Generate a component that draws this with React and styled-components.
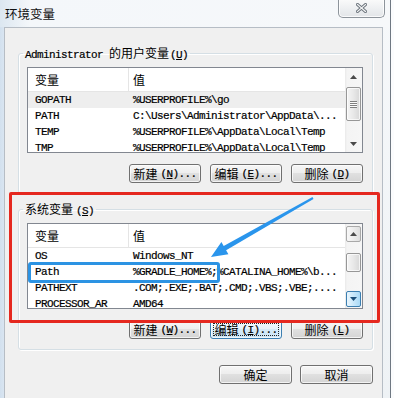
import React from "react";
import styled, { createGlobalStyle, css } from "styled-components";

const CJK = `"Noto Sans CJK SC", "Noto Sans", sans-serif`;
const MONO = `"Liberation Mono", "Noto Sans CJK SC", monospace`;

const GlobalStyle = createGlobalStyle`
  html, body { margin: 0; padding: 0; }
  body { width: 394px; height: 398px; overflow: hidden; background: #fbfcfd; font-family: ${CJK}; }
  * { box-sizing: border-box; }
`;

const Screen = styled.div`
  position: relative;
  width: 394px;
  height: 398px;
  overflow: hidden;
  display: flex;
  background: #fbfcfd;
`;

const Frame = styled.div`
  width: 391px;
  height: 100%;
  display: flex;
  flex-direction: column;
  border-right: 1px solid #6f7882;
  background: linear-gradient(180deg, #f6f8fa 0%, #eef2f5 100%);
`;

const TitleBar = styled.div`
  flex: none;
  height: 27px;
  display: flex;
  align-items: flex-start;
  background: linear-gradient(90deg, #dce7f1 0px, #f4f7fa 30px, #f6f8fa 100%);
`;

const Title = styled.span`
  margin: 6px 0 0 5px;
  font: 12.5px/16px ${CJK};
  color: #111;
`;

const CloseButton = styled.div`
  margin: -1px 5px 0 auto;
  width: 47px;
  height: 19px;
  border: 1px solid #8d949b;
  border-top: none;
  border-radius: 0 0 5px 5px;
  background: linear-gradient(180deg, #fbfbfb 0%, #eef0f2 50%, #e2e5e8 100%);
  box-shadow: inset 0 0 0 1px rgba(255, 255, 255, 0.8);
  display: flex;
  align-items: center;
  justify-content: center;
`;

const ClientRow = styled.div`
  flex: 1;
  display: flex;
  padding-left: 4px;
  background: linear-gradient(90deg, #d2e0ee 0px, #d9e5f1 4px, transparent 4px);
`;

const Client = styled.div`
  width: 379px;
  background: #f0f0f0;
  border: 1px solid #b6bdc5;
  border-bottom: none;
  display: flex;
  flex-direction: column;
  padding-left: 13px;
`;

const Group = styled.fieldset`
  margin: ${(p) => p.$top}px 0 0 0;
  width: 355px;
  min-width: 0;
  padding: 7px 9px 10px 8px;
  border: 1px solid #d5dfe5;
  border-radius: 3px;
  box-shadow: inset 1px 1px 0 #fff, 1px 1px 0 #fff;
`;

const Legend = styled.legend`
  padding: 0 2px;
  margin-left: -4px;
  height: 14px;
  font: 12px/14px ${CJK};
  color: #000;
  white-space: nowrap;
`;

const Mono = styled.span`
  font-family: ${MONO};
  font-size: 11px;
  letter-spacing: -0.6px;
  line-height: 14px;
  -webkit-text-stroke: 0.2px currentColor;
`;

const Gap = styled.span`
  display: inline-block;
  width: ${(p) => p.$w}px;
`;

const Key = styled.span`
  text-decoration: underline;
  text-underline-offset: 1px;
`;

const List = styled.div`
  height: 86px;
  border: 1px solid #828790;
  background: #fff;
  display: flex;
  overflow: hidden;
`;

const ListBody = styled.div`
  flex: 1;
  min-width: 0;
  overflow: hidden;
`;

const HeaderRow = styled.div`
  height: 24px;
  display: flex;
  border-bottom: 1px solid #e5e5e5;
`;

const HeaderCell = styled.div`
  display: flex;
  align-items: center;
  font: 12px/16px ${CJK};
  color: #000;
  ${(p) =>
    p.$name
      ? css`
          width: 101px;
          flex: none;
          padding-left: 7px;
          border-right: 1px solid #e5e5e5;
        `
      : css`
          flex: 1;
          padding-left: 4px;
        `}
`;

const Row = styled.div`
  height: 16px;
  display: flex;
  align-items: center;
  white-space: nowrap;
  background: ${(p) => (p.$selected ? "#eeeeee" : "transparent")};
  font-family: ${MONO};
  font-size: 11px;
  letter-spacing: -0.6px;
  line-height: 16px;
  color: #000;
  -webkit-text-stroke: 0.2px #000;
`;

const NameCell = styled.div`
  width: 101px;
  flex: none;
  padding-left: 7px;
  overflow: hidden;
`;

const ValueCell = styled.div`
  flex: 1;
  padding-left: 4px;
  overflow: hidden;
`;

const ScrollBar = styled.div`
  width: 17px;
  flex: none;
  display: flex;
  flex-direction: column;
  background: linear-gradient(90deg, #e9e9e9 0px, #f4f4f4 2px, #f6f6f6 100%);
`;

const scrollBtnVariants = {
  plain: css`
    height: 17px;
    border: 1px solid transparent;
  `,
  hover: css`
    height: 16px;
    margin: 2px 1px 0 1px;
    border: 1px solid #a9a9a9;
    border-radius: 2px;
    background: linear-gradient(90deg, #f8f8f8 0%, #ececec 50%, #dedede 100%);
  `,
  pressed: css`
    height: 16px;
    margin: 0 1px 1px 1px;
    border: 1px solid #3c7fb1;
    border-radius: 2px;
    background: linear-gradient(90deg, #eaf6fd 0%, #c9e8fb 50%, #a9d9f6 100%);
  `,
};

const ScrollButton = styled.div`
  flex: none;
  display: flex;
  align-items: center;
  justify-content: center;
  ${(p) => scrollBtnVariants[p.$variant || "plain"]}
`;

const Thumb = styled.div`
  flex: none;
  margin: ${(p) => p.$offset}px 1px 0 1px;
  height: ${(p) => p.$size}px;
  border: 1px solid #979797;
  border-radius: 2px;
  background: linear-gradient(90deg, #f5f5f5 0%, #e8e8e8 50%, #d7d7d7 100%);
  box-shadow: inset 0 0 0 1px rgba(255, 255, 255, 0.7);
  display: flex;
  align-items: center;
  justify-content: center;
`;

const Grip = styled.span`
  width: 7px;
  height: 7px;
  background: repeating-linear-gradient(180deg, #7f7f7f 0px, #7f7f7f 1px, #fbfbfb 1px, #fbfbfb 2px);
`;

const Track = styled.div`
  flex: 1;
`;

const ButtonRow = styled.div`
  display: flex;
  justify-content: flex-end;
  gap: ${(p) => p.$gap || 9}px;
  margin-top: ${(p) => p.$top || 11}px;
  width: ${(p) => (p.$width ? p.$width + "px" : "auto")};
`;

const Button = styled.button`
  position: relative;
  width: ${(p) => p.$w || 72}px;
  height: 19px;
  padding: 0;
  border: 1px solid ${(p) => (p.$focused ? "#3c7fb1" : "#707070")};
  border-radius: 3px;
  background: ${(p) =>
    p.$focused
      ? "linear-gradient(180deg, #f4fafe 0%, #e6f3fb 50%, #d6ebf8 50%, #cae4f5 100%)"
      : "linear-gradient(180deg, #f6f6f6 0%, #ededed 50%, #e0e0e0 50%, #d4d4d4 100%)"};
  box-shadow: inset 0 0 0 1px rgba(255, 255, 255, 0.7);
  font: 12px/17px ${CJK};
  color: #000;
  display: flex;
  align-items: center;
  justify-content: center;
  white-space: nowrap;
  ${(p) =>
    p.$focused &&
    css`
      &::after {
        content: "";
        position: absolute;
        inset: 2px;
        border: 1px dotted #222;
      }
    `}
`;

const RedBox = styled.div`
  position: absolute;
  left: 9px;
  top: 192px;
  width: 371px;
  height: 131px;
  border: 3px solid #e5281f;
  border-radius: 2px;
  pointer-events: none;
`;

const BlueBox = styled.div`
  position: absolute;
  left: 28px;
  top: 262px;
  width: 192px;
  height: 21px;
  border: 3px solid #2c93e3;
  border-radius: 3px;
  pointer-events: none;
`;

const ArrowLayer = styled.svg`
  position: absolute;
  left: 0;
  top: 0;
  pointer-events: none;
`;

const Arrow = ({ dir }) => (
  <svg width="7" height="4" viewBox="0 0 7 4">
    {dir === "up" ? (
      <polygon points="3.5,0 7,4 0,4" fill="#4a4a4a" />
    ) : (
      <polygon points="0,0 7,0 3.5,4" fill="#4a4a4a" />
    )}
  </svg>
);

const DownArrowBlue = () => (
  <svg width="7" height="4" viewBox="0 0 7 4">
    <polygon points="0,0 7,0 3.5,4" fill="#1c4f7a" />
  </svg>
);

const CloseIcon = () => (
  <svg width="11" height="10" viewBox="0 0 11 10">
    <path d="M1.5 1.5 L9.5 8.5 M9.5 1.5 L1.5 8.5" stroke="#6b737b" strokeWidth="3" strokeLinecap="square" fill="none" />
    <path d="M1.5 1.5 L9.5 8.5 M9.5 1.5 L1.5 8.5" stroke="#f4f5f6" strokeWidth="1.2" strokeLinecap="square" fill="none" />
  </svg>
);

const userVars = [
  { name: "GOPATH", value: "%USERPROFILE%\\go", selected: true },
  { name: "PATH", value: "C:\\Users\\Administrator\\AppData\\..." },
  { name: "TEMP", value: "%USERPROFILE%\\AppData\\Local\\Temp" },
  { name: "TMP", value: "%USERPROFILE%\\AppData\\Local\\Temp" },
];

const sysVars = [
  { name: "OS", value: "Windows_NT" },
  { name: "Path", value: "%GRADLE_HOME%;%CATALINA_HOME%\\b..." },
  { name: "PATHEXT", value: ".COM;.EXE;.BAT;.CMD;.VBS;.VBE;...." },
  { name: "PROCESSOR_AR", value: "AMD64" },
];

const VarList = ({ rows, scroll }) => (
  <List>
    <ListBody>
      <HeaderRow>
        <HeaderCell $name>变量</HeaderCell>
        <HeaderCell>值</HeaderCell>
      </HeaderRow>
      {rows.map((r) => (
        <Row key={r.name} $selected={r.selected}>
          <NameCell>{r.name}</NameCell>
          <ValueCell>{r.value}</ValueCell>
        </Row>
      ))}
    </ListBody>
    <ScrollBar>
      <ScrollButton $variant={scroll.up}>
        <Arrow dir="up" />
      </ScrollButton>
      <Thumb $offset={scroll.thumbTop} $size={scroll.thumbSize}>
        {scroll.grip && <Grip />}
      </Thumb>
      <Track />
      <ScrollButton $variant={scroll.down}>
        {scroll.down === "pressed" ? <DownArrowBlue /> : <Arrow dir="down" />}
      </ScrollButton>
    </ScrollBar>
  </List>
);

const ActionLabel = ({ text, k, dots = true }) => (
  <>
    {text}
    <Gap $w={3} />
    <Mono>
      (<Key>{k}</Key>){dots ? "..." : ""}
    </Mono>
  </>
);

export default function App() {
  return (
    <>
      <GlobalStyle />
      <Screen>
        <Frame>
          <TitleBar>
            <Title>环境变量</Title>
            <CloseButton>
              <CloseIcon />
            </CloseButton>
          </TitleBar>
          <ClientRow>
            <Client>
              <Group $top={18}>
                <Legend>
                  <Mono>Administrator </Mono>的用户变量<Gap $w={1} /><Mono>(<Key>U</Key>)</Mono>
                </Legend>
                <VarList
                  rows={userVars}
                  scroll={{ up: "plain", down: "plain", thumbTop: 2, thumbSize: 34, grip: true }}
                />
                <ButtonRow>
                  <Button>
                    <ActionLabel text="新建" k="N" />
                  </Button>
                  <Button>
                    <ActionLabel text="编辑" k="E" />
                  </Button>
                  <Button>
                    <ActionLabel text="删除" k="D" dots={false} />
                  </Button>
                </ButtonRow>
              </Group>
              <Group $top={8}>
                <Legend>
                  系统变量<Gap $w={3} /><Mono>(<Key>S</Key>)</Mono>
                </Legend>
                <VarList
                  rows={sysVars}
                  scroll={{ up: "hover", down: "pressed", thumbTop: 11, thumbSize: 19, grip: false }}
                />
                <ButtonRow>
                  <Button>
                    <ActionLabel text="新建" k="W" />
                  </Button>
                  <Button $focused>
                    <ActionLabel text="编辑" k="I" />
                  </Button>
                  <Button>
                    <ActionLabel text="删除" k="L" dots={false} />
                  </Button>
                </ButtonRow>
              </Group>
              <ButtonRow $top={15} $gap={8} $width={355}>
                <Button $w={73}>确定</Button>
                <Button $w={73}>取消</Button>
              </ButtonRow>
            </Client>
          </ClientRow>
        </Frame>
        <RedBox />
        <BlueBox />
        <ArrowLayer width="394" height="398" viewBox="0 0 394 398">
          <polygon
            points="312.5,197.1 223.7,245.9 221.4,242.0 211,257 228.4,254.2 226.1,250.3 313.5,198.9"
            fill="#2a95ec"
          />
        </ArrowLayer>
      </Screen>
    </>
  );
}
